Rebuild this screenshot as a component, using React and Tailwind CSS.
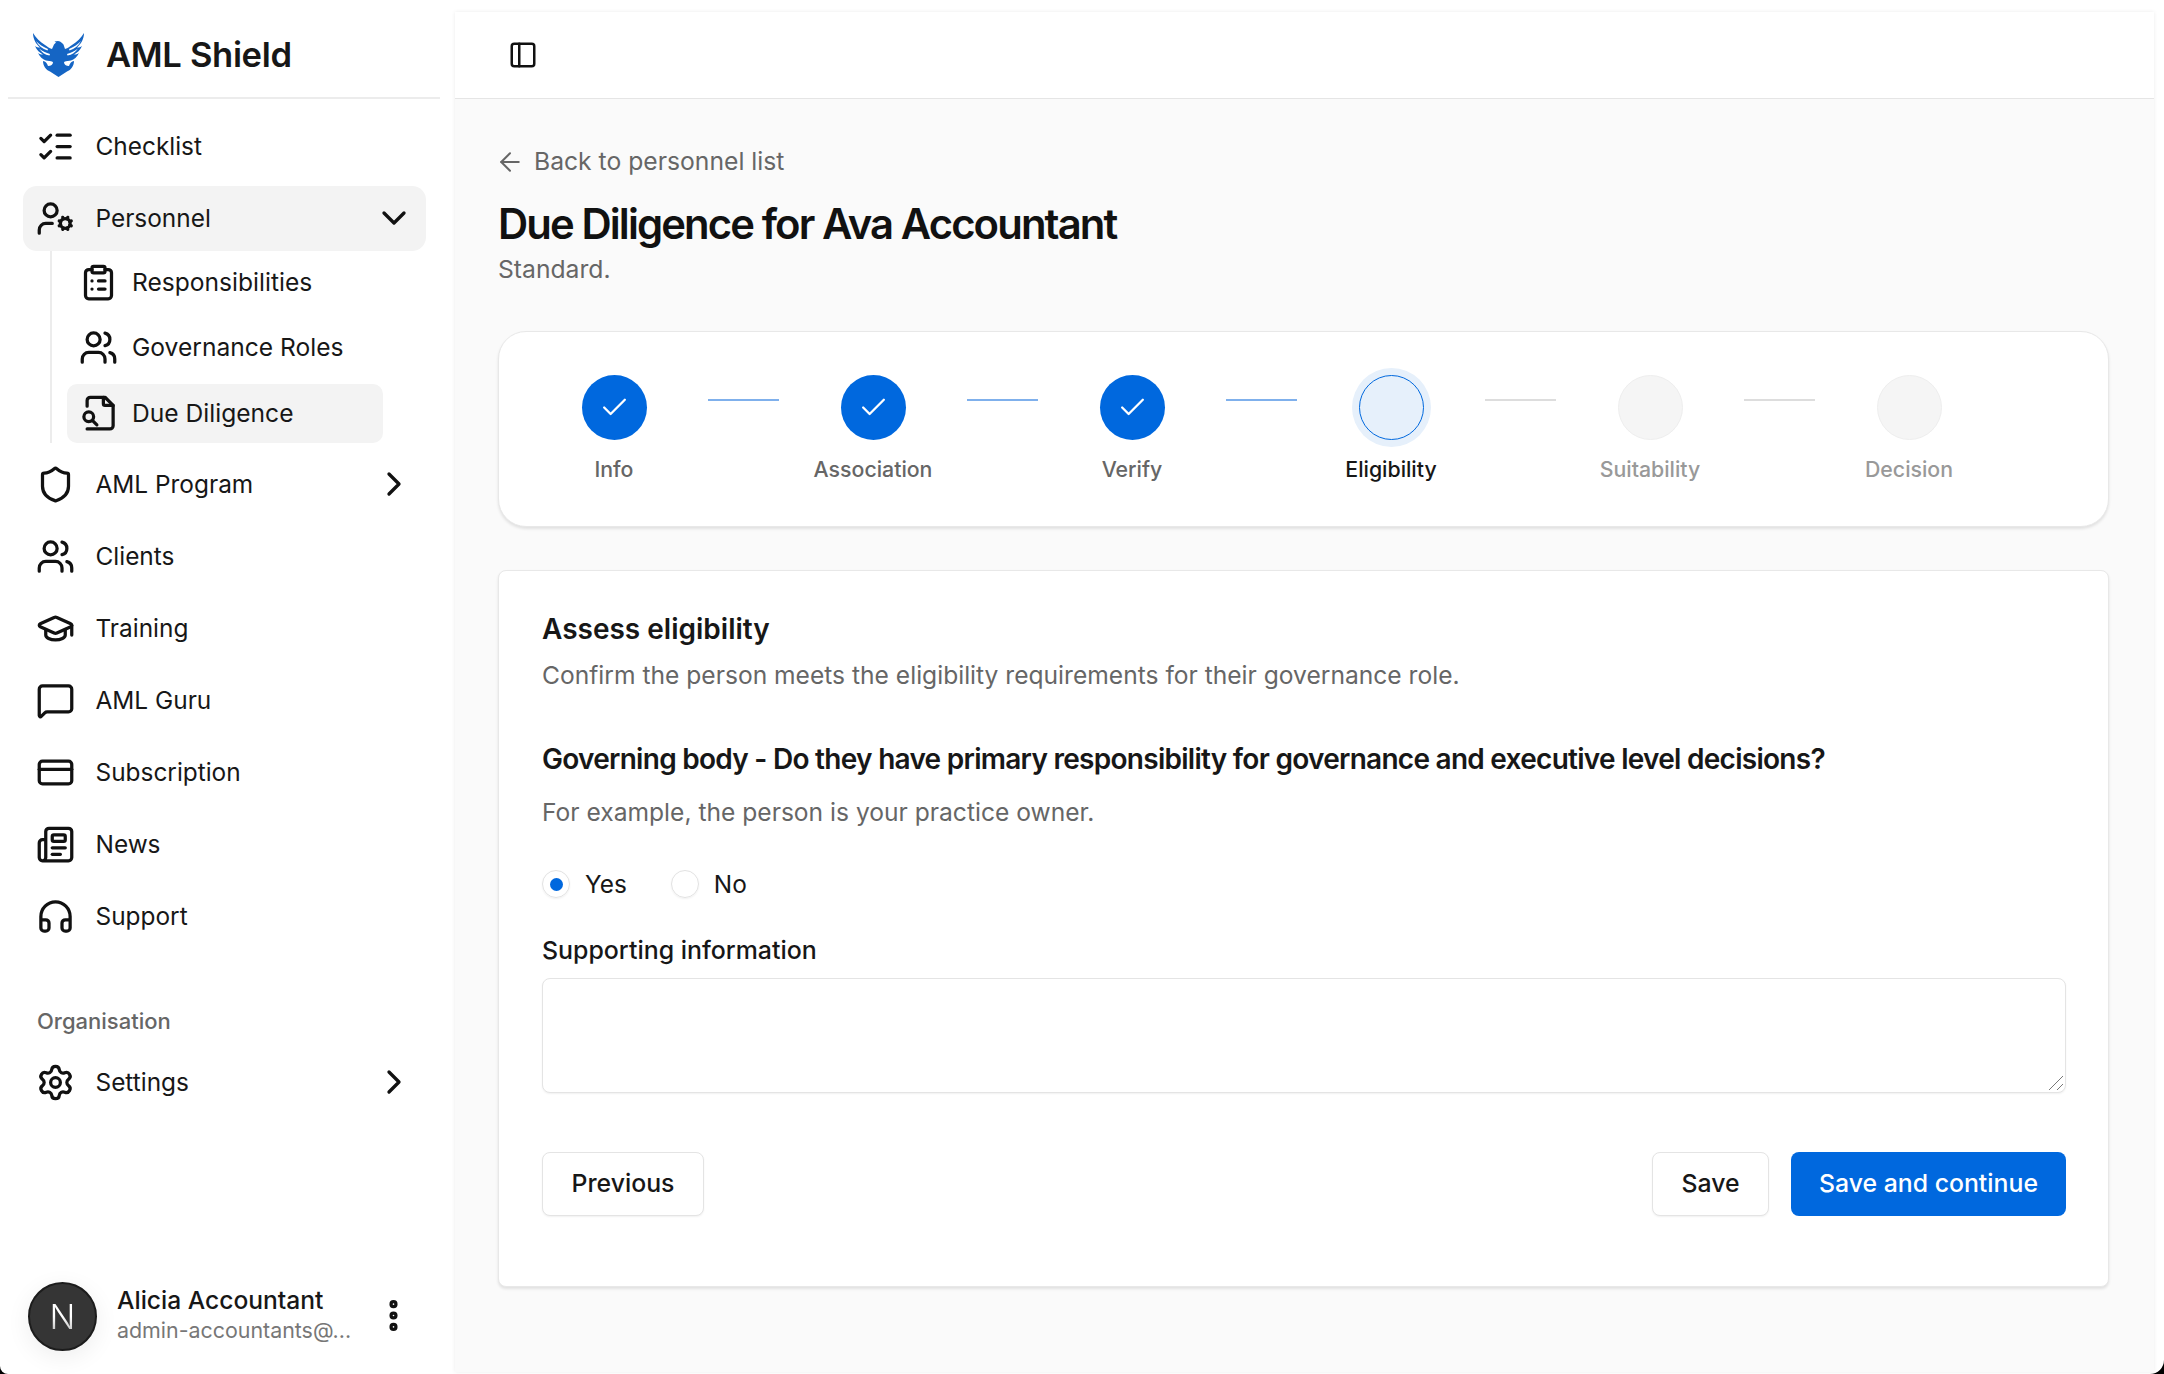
import React from 'react'
import {
  ListChecks, UserCog, ChevronDown, ChevronRight, ClipboardList, Users, Shield,
  GraduationCap, MessageSquare, CreditCard, Newspaper, Headphones, Settings, EllipsisVertical,
  PanelLeft, ArrowLeft, Check,
} from 'lucide-react'

const Logo = () => (
  <svg width="51" height="44" viewBox="0 0 51 44" fill="#1565c4">
    <path d="M0 0C3 5 7 9 12 12C14 13.500 16 15 19 16L21 11.500L23 9.500L21.500 8.500L25 8L27 8.500L29 10L30.500 11.500L32 16C35 15 37 13.500 39 12C44 9 48 5 51 0C51 6 48 11 44 14.500C46 14.500 47.500 14 49 13C47.500 17 44 20 41 21.500C43 21.500 44.500 21 46 20C44 24 41 26.500 38 27.500C36 28 33.500 27.500 31 29C31 31.500 33 33 36 33C37 30 38.500 28.500 41 28C41 33 38 37 34 38.500L25.500 44L17 38.500C13 37 10 33 10 28C12.500 28.500 14 30 15 33C18 33 20 31.500 20 29C17.500 27.500 15 28 13 27.500C10 26.500 7 24 5 20C6.500 21 8 21.500 10 21.500C7 20 3.500 17 2 13C3.500 14 5 14.500 7 14.500C3 11 0 6 0 0Z" />
    <path d="M3 8C6 11 10 14 15 16L14.500 17.500C9.500 16 5.500 12.500 3 8ZM48 8C45 11 41 14 36 16L36.500 17.500C41.500 16 45.500 12.500 48 8Z" fill="#fff" />
    <path d="M6 15.500C9 18 13 20 17 21L16.500 22.500C12 22 8.500 19 6 15.500ZM45 15.500C42 18 38 20 34 21L34.500 22.500C39 22 42.500 19 45 15.500Z" fill="#fff" />
  </svg>
)

// lucide's newer file-search has the glass inside the page, the design has it at the corner
const FileSearchCorner = ({ size, strokeWidth, className }) => (
  <svg width={size} height={size} viewBox="0 0 24 24" fill="none" stroke="currentColor" strokeWidth={strokeWidth} strokeLinecap="round" strokeLinejoin="round" className={className}>
    <path d="M5 21.500h14a2 2 0 0 0 2-2V7l-5-5H7a2 2 0 0 0-2 2v3.500" />
    <path d="M15 2v4a1 1 0 0 0 1 1h5" />
    <circle cx="6" cy="14" r="3" />
    <path d="m11 19-2.800-2.800" />
  </svg>
)

const NavItem = ({ icon: Icon, label, active, chevron }) => (
  <div className={`flex items-center h-[65px] rounded-[14px] pl-[13px] pr-[12px] ${active ? 'bg-[#f3f3f3]' : ''}`}>
    <Icon size={39} strokeWidth={2} className="text-[#111] shrink-0" />
    <span className="ml-[20.500px] text-[24.4px] text-[#171717] flex-1">{label}</span>
    {chevron === 'down' && <ChevronDown size={40} strokeWidth={2} className="text-[#111]" />}
    {chevron === 'right' && <ChevronRight size={40} strokeWidth={2} className="text-[#111]" />}
  </div>
)

const SubItem = ({ icon: Icon, label, active }) => (
  <div className={`flex items-center h-[59px] rounded-[10px] pl-[12px] ${active ? 'bg-[#f3f3f3]' : ''}`}>
    <Icon size={39} strokeWidth={2} className="text-[#111] shrink-0" />
    <span className="ml-[14px] text-[24.6px] text-[#171717]">{label}</span>
  </div>
)

const steps = [
  { label: 'Info', state: 'done' },
  { label: 'Association', state: 'done' },
  { label: 'Verify', state: 'done' },
  { label: 'Eligibility', state: 'active' },
  { label: 'Suitability', state: 'todo' },
  { label: 'Decision', state: 'todo' },
]

const Step = ({ label, state }) => (
  <div className="w-[144px] flex flex-col items-center shrink-0">
    <div className={`w-[65px] h-[65px] rounded-full flex items-center justify-center ${
      state === 'done' ? 'bg-[#0068de]' : state === 'active' ? 'bg-[#e6f0fb] border border-[#0068de] ring-[7px] ring-[#e6f0fb]' : 'bg-[#f5f5f5] border border-[#eeeeee]'
    }`}>
      {state === 'done' && <Check size={31} strokeWidth={1.8} className="text-white" />}
    </div>
    <span className={`mt-[14px] text-[21.3px] font-medium whitespace-nowrap ${
      state === 'active' ? 'text-[#171717]' : state === 'done' ? 'text-[#666]' : 'text-[#999]'
    }`}>{label}</span>
  </div>
)

const App = () => (
  <div className="h-[1374px] w-[2164px] bg-black overflow-hidden font-['Inter',sans-serif] text-[#171717]">
    <div className="h-full w-full bg-white flex rounded-bl-[8px] rounded-br-[14px] overflow-hidden">
      <aside className="w-[455px] shrink-0 flex flex-col">
        <div className="h-[99px] ml-[8px] mr-[15px] border-b-2 border-[#ececec] flex items-center pl-[25px] pt-[13px]">
          <Logo />
          <span className="ml-[22px] text-[34.6px] font-semibold tracking-[-0.01em]">AML Shield</span>
        </div>
        <nav className="pl-[23px] pr-[29px] pt-[15px] flex flex-col gap-[6.500px]">
          <NavItem icon={ListChecks} label="Checklist" />
          <NavItem icon={UserCog} label="Personnel" active chevron="down" />
        </nav>
        <div className="ml-[50px] w-[333px] border-l-2 border-[#ececec] pl-[15px] flex flex-col gap-[6.500px] pt-[2px]">
          <SubItem icon={ClipboardList} label="Responsibilities" />
          <SubItem icon={Users} label="Governance Roles" />
          <SubItem icon={FileSearchCorner} label="Due Diligence" active />
        </div>
        <nav className="pl-[23px] pr-[29px] pt-[9px] flex flex-col gap-[7px]">
          <NavItem icon={Shield} label="AML Program" chevron="right" />
          <NavItem icon={Users} label="Clients" />
          <NavItem icon={GraduationCap} label="Training" />
          <NavItem icon={MessageSquare} label="AML Guru" />
          <NavItem icon={CreditCard} label="Subscription" />
          <NavItem icon={Newspaper} label="News" />
          <NavItem icon={Headphones} label="Support" />
        </nav>
        <div className="pl-[37px] mt-[56px] text-[22px] font-medium text-[#666]">Organisation</div>
        <nav className="pl-[23px] pr-[29px] pt-[12px]">
          <NavItem icon={Settings} label="Settings" chevron="right" />
        </nav>
        <div className="mt-auto mb-[23px] flex items-center pl-[28px] pr-[42px]">
          <div className="w-[69px] h-[69px] rounded-full bg-[#353535] border-2 border-[#1c1c1c] shadow-[0_6px_24px_rgba(0,0,0,0.07)] flex items-center justify-center text-[34px] font-light shrink-0">
            <span className="bg-linear-to-b from-white via-white to-[#999] bg-clip-text text-transparent">N</span>
          </div>
          <div className="ml-[20px] flex-1 min-w-0 mb-[4px]">
            <div className="text-[24.6px] font-medium leading-[30px]">Alicia Accountant</div>
            <div className="text-[21.4px] text-[#777] leading-[30px]">admin-accountants@...</div>
          </div>
          <EllipsisVertical size={39} strokeWidth={3} className="text-[#111] shrink-0 ml-[-20px] mb-[2px]" />
        </div>
      </aside>
      <main className="flex-1 mt-[12px] mr-[10px] mb-[2px] bg-[#fafafa] flex flex-col shadow-[0_0_4px_rgba(0,0,0,0.08)]">
        <header className="h-[87px] bg-white border-b border-[#e5e5e5] flex items-center pl-[53px] shrink-0">
          <PanelLeft size={30} strokeWidth={2} className="text-[#111]" />
        </header>
        <div className="pl-[43px] pr-[45px] pt-[44px]">
          <div className="flex items-center gap-[9px] text-[#666] ml-[-3px]">
            <ArrowLeft size={30} strokeWidth={1.6} />
            <span className="text-[24.7px]">Back to personnel list</span>
          </div>
          <h1 className="mt-[18px] text-[41.8px] font-semibold tracking-[-0.045em] leading-[52px] text-[#111]">Due Diligence for Ava Accountant</h1>
          <p className="mt-[1px] text-[24.7px] text-[#666]">Standard.</p>

          <section className="mt-[43px] h-[196px] bg-white border border-[#e8e8e8] rounded-[28px] shadow-[0_2px_3px_rgba(0,0,0,0.1)] pl-[43px] pt-[43px] flex items-start">
            {steps.map((s, i) => (
              <React.Fragment key={s.label}>
                <Step {...s} />
                {i < steps.length - 1 && (
                  <div className="w-[115px] shrink-0 px-[22px] pt-[24px]">
                    <div className={`h-[2px] ${s.state === 'done' ? 'bg-[#7fb0ec]' : 'bg-[#dddddd]'}`} />
                  </div>
                )}
              </React.Fragment>
            ))}
          </section>

          <section className="mt-[43px] h-[717px] bg-white border border-[#e8e8e8] rounded-[8px] shadow-[0_2px_3px_rgba(0,0,0,0.1)] pl-[43px] pr-[42px] pt-[40px]">
            <h2 className="text-[28px] font-semibold leading-[36px]">Assess eligibility</h2>
            <p className="mt-[10px] text-[24.6px] text-[#666]">Confirm the person meets the eligibility requirements for their governance role.</p>
            <h3 className="mt-[47px] text-[28px] font-semibold tracking-[-0.026em] leading-[36px]">Governing body - Do they have primary responsibility for governance and executive level decisions?</h3>
            <p className="mt-[17px] text-[24.6px] text-[#666]">For example, the person is your practice owner.</p>
            <div className="mt-[35px] flex items-center">
              <span className="w-[28px] h-[28px] rounded-full border border-[#e2e2e2] flex items-center justify-center shadow-[0_1px_2px_rgba(0,0,0,0.06)]">
                <span className="w-[13px] h-[13px] rounded-full bg-[#0068de]" />
              </span>
              <span className="ml-[15px] text-[24.4px]">Yes</span>
              <span className="ml-[44px] w-[28px] h-[28px] rounded-full border border-[#e2e2e2] shadow-[0_1px_2px_rgba(0,0,0,0.06)]" />
              <span className="ml-[15px] text-[24.4px]">No</span>
            </div>
            <label className="block mt-[30px] text-[24.9px] font-medium">Supporting information</label>
            <div className="relative mt-[8px]">
              <textarea className="block w-full h-[115px] bg-white border border-[#e4e4e4] rounded-[8px] shadow-[0_1px_2px_rgba(0,0,0,0.06)] resize-none" />
              <svg width="16" height="16" viewBox="0 0 16 16" fill="none" stroke="#777" strokeWidth="1" className="absolute right-[2px] bottom-[2px]">
                <path d="M1 15 15 1M9 15l6-6" />
              </svg>
            </div>
            <div className="mt-[59px] flex items-center">
              <button className="h-[64px] w-[162px] bg-white border border-[#e4e4e4] rounded-[8px] text-[24.8px] font-medium shadow-[0_1px_2px_rgba(0,0,0,0.06)]">Previous</button>
              <button className="ml-auto h-[64px] w-[117px] bg-white border border-[#e4e4e4] rounded-[8px] text-[24.8px] font-medium shadow-[0_1px_2px_rgba(0,0,0,0.06)]">Save</button>
              <button className="ml-[22px] h-[64px] w-[275px] bg-[#0068de] rounded-[8px] text-[24.8px] font-medium text-white">Save and continue</button>
            </div>
          </section>
        </div>
      </main>
    </div>
  </div>
)

export default App
